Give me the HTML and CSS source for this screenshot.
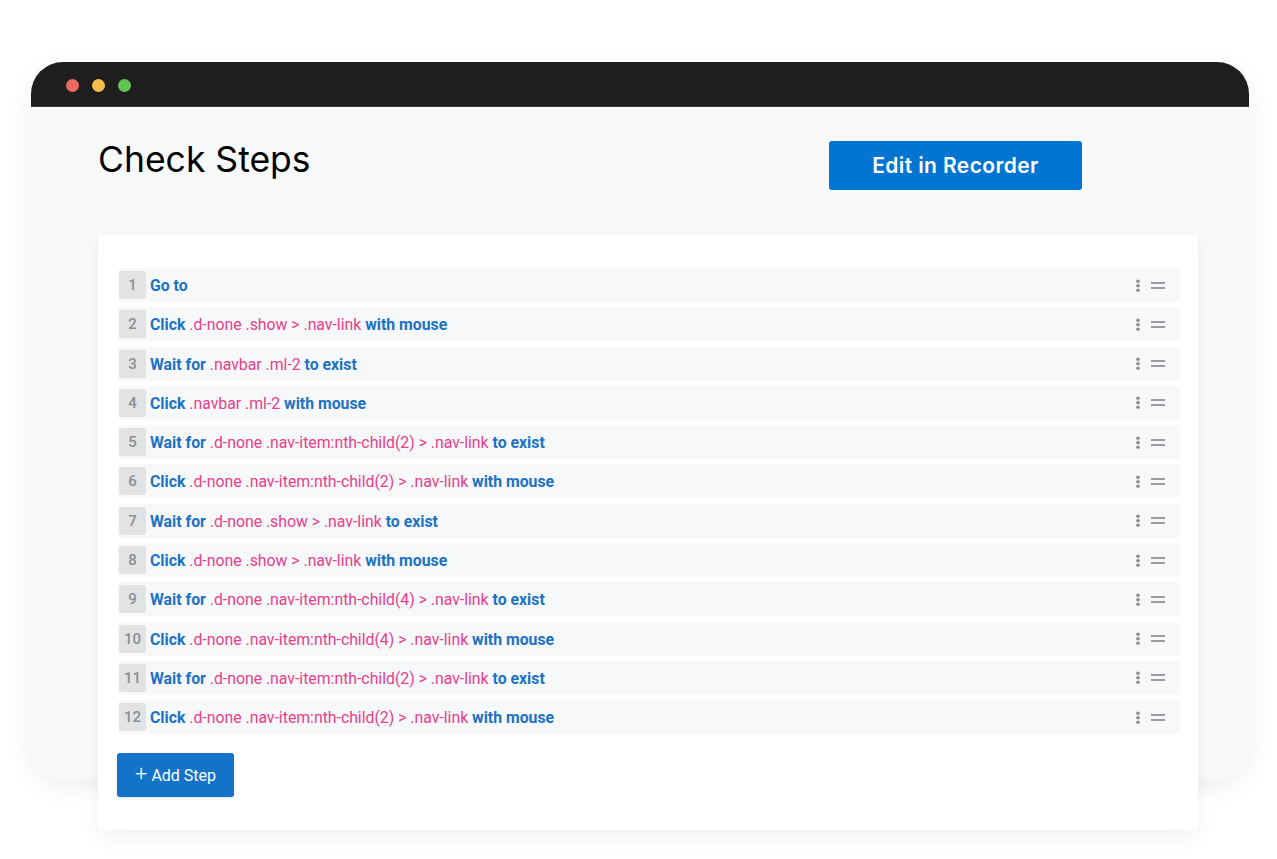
FILE: index.html
```html
<!DOCTYPE html>
<html lang="en">
<head>
    <meta charset="UTF-8">
    <meta name="viewport" content="width=device-width, initial-scale=1.0">
    <title>Check Steps</title>
    <link rel="stylesheet" href="styles.css">
</head>
<body>
    <div class="window">
        <div class="titlebar">
            <span class="dot red"></span>
            <span class="dot yellow"></span>
            <span class="dot green"></span>
        </div>
        <div class="window-body">
            <div class="header">
                <h1>Check Steps</h1>
                <button class="btn-recorder">Edit in Recorder</button>
            </div>
        </div>
    </div>

    <div class="steps-card">
        <ul class="steps">
            <li class="step"><span class="num">1</span><span class="text"><b>Go to</b></span><span class="actions"><i class="kebab"></i><i class="drag"></i></span></li>
            <li class="step"><span class="num">2</span><span class="text"><b>Click</b> <em>.d-none .show &gt; .nav-link</em> <b>with mouse</b></span><span class="actions"><i class="kebab"></i><i class="drag"></i></span></li>
            <li class="step"><span class="num">3</span><span class="text"><b>Wait for</b> <em>.navbar .ml-2</em> <b>to exist</b></span><span class="actions"><i class="kebab"></i><i class="drag"></i></span></li>
            <li class="step"><span class="num">4</span><span class="text"><b>Click</b> <em>.navbar .ml-2</em> <b>with mouse</b></span><span class="actions"><i class="kebab"></i><i class="drag"></i></span></li>
            <li class="step"><span class="num">5</span><span class="text"><b>Wait for</b> <em>.d-none .nav-item:nth-child(2) &gt; .nav-link</em> <b>to exist</b></span><span class="actions"><i class="kebab"></i><i class="drag"></i></span></li>
            <li class="step"><span class="num">6</span><span class="text"><b>Click</b> <em>.d-none .nav-item:nth-child(2) &gt; .nav-link</em> <b>with mouse</b></span><span class="actions"><i class="kebab"></i><i class="drag"></i></span></li>
            <li class="step"><span class="num">7</span><span class="text"><b>Wait for</b> <em>.d-none .show &gt; .nav-link</em> <b>to exist</b></span><span class="actions"><i class="kebab"></i><i class="drag"></i></span></li>
            <li class="step"><span class="num">8</span><span class="text"><b>Click</b> <em>.d-none .show &gt; .nav-link</em> <b>with mouse</b></span><span class="actions"><i class="kebab"></i><i class="drag"></i></span></li>
            <li class="step"><span class="num">9</span><span class="text"><b>Wait for</b> <em>.d-none .nav-item:nth-child(4) &gt; .nav-link</em> <b>to exist</b></span><span class="actions"><i class="kebab"></i><i class="drag"></i></span></li>
            <li class="step"><span class="num">10</span><span class="text"><b>Click</b> <em>.d-none .nav-item:nth-child(4) &gt; .nav-link</em> <b>with mouse</b></span><span class="actions"><i class="kebab"></i><i class="drag"></i></span></li>
            <li class="step"><span class="num">11</span><span class="text"><b>Wait for</b> <em>.d-none .nav-item:nth-child(2) &gt; .nav-link</em> <b>to exist</b></span><span class="actions"><i class="kebab"></i><i class="drag"></i></span></li>
            <li class="step"><span class="num">12</span><span class="text"><b>Click</b> <em>.d-none .nav-item:nth-child(2) &gt; .nav-link</em> <b>with mouse</b></span><span class="actions"><i class="kebab"></i><i class="drag"></i></span></li>
        </ul>
        <button class="btn-add"><span class="plus">+</span> Add Step</button>
    </div>
</body>
</html>
```

FILE: styles.css
```css
body {
    margin: 0;
    background-color: #ffffff;
    font-family: 'Inter', 'Roboto', sans-serif;
    width: 1277px;
    height: 859px;
    overflow: hidden;
}
.window {
    margin: 62px 0 0 31px;
    width: 1218px;
    height: 718px;
    border-radius: 32px;
    background-color: #f8f9fb;
    box-shadow: 0 6px 24px rgba(0, 0, 0, 0.07);
    overflow: hidden;
}
.titlebar {
    height: 45px;
    box-sizing: border-box;
    background-color: #1e1e1e;
    display: flex;
    align-items: center;
    gap: 13px;
    padding: 3px 0 0 35px;
    border-bottom: 1px solid #3a3a3a;
}
.dot {
    width: 13px;
    height: 13px;
    border-radius: 50%;
}
.dot.red { background-color: #ed6a5e; }
.dot.yellow { background-color: #f5bf4f; }
.dot.green { background-color: #61c554; }
.header {
    display: flex;
    align-items: flex-start;
    padding: 32px 0 0 67px;
}
.header h1 {
    margin: 0;
    font-family: 'Inter', sans-serif;
    font-weight: 400;
    font-size: 35.5px;
    color: #000;
    line-height: 42px;
    width: 731px;
}
.btn-recorder {
    width: 253px;
    height: 49px;
    margin-top: 2px;
    background-color: #0274d1;
    color: #fff;
    border: none;
    border-radius: 3px;
    font-family: 'Inter', sans-serif;
    font-weight: 600;
    font-size: 21px;
    letter-spacing: 0.4px;
    cursor: pointer;
}
.steps-card {
    position: absolute;
    left: 98px;
    top: 235px;
    width: 1100px;
    height: 595px;
    box-sizing: border-box;
    padding: 33px 18px 0 20px;
    background-color: #fff;
    box-shadow: 0 6px 20px rgba(0, 0, 0, 0.06);
}
.steps {
    list-style: none;
    margin: 0;
    padding: 0;
    display: flex;
    flex-direction: column;
    gap: 5.3px;
}
.step {
    display: flex;
    align-items: center;
    height: 34px;
    background-color: #f7f8fa;
    border-radius: 4px;
    font-family: 'Roboto', sans-serif;
    font-size: 15.8px;
}
.num {
    width: 27px;
    height: 28px;
    margin-left: 1px;
    display: flex;
    align-items: center;
    justify-content: center;
    background-color: #e2e3e5;
    border-radius: 2px;
    color: #8c8e91;
    font-weight: 500;
    font-size: 15px;
}
.text {
    flex: 1;
    padding-left: 4px;
    padding-top: 1px;
    white-space: nowrap;
}
.text b {
    color: #1b72c5;
    font-weight: 700;
}
.text em {
    color: #e8408a;
    font-style: normal;
}
.actions {
    display: flex;
    align-items: center;
    gap: 11px;
    padding-right: 15px;
}
.kebab {
    width: 4px;
    height: 13px;
    background: radial-gradient(circle, #8a8c8f 1.5px, transparent 2px) 0 0 / 4px 4.5px repeat-y;
}
.drag {
    width: 14px;
    height: 7px;
    border-top: 2px solid #9a9c9f;
    border-bottom: 2px solid #9a9c9f;
    box-sizing: border-box;
}
.btn-add {
    margin-top: 19px;
    margin-left: -1px;
    width: 117px;
    height: 44px;
    background-color: #1273c8;
    color: #fff;
    border: none;
    border-radius: 3px;
    font-family: 'Roboto', sans-serif;
    font-size: 16px;
    display: flex;
    align-items: center;
    justify-content: center;
    gap: 4px;
    box-shadow: 0 1px 3px rgba(0, 0, 0, 0.15);
    cursor: pointer;
}
.plus {
    font-size: 22px;
    font-weight: 300;
    line-height: 1;
    margin-top: -2px;
}
```
